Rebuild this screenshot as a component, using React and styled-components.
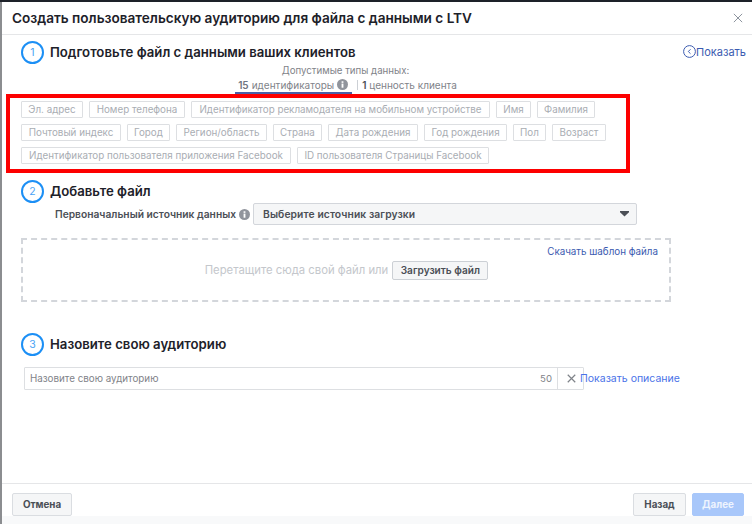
import React from "react";
import styled, { createGlobalStyle } from "styled-components";

const Global = createGlobalStyle`
  html, body { margin: 0; padding: 0; background: #fff; }
  body { font-family: Inter, "Liberation Sans", sans-serif; -webkit-font-smoothing: antialiased; }
`;

const Page = styled.div`
  width: 752px; height: 524px; overflow: hidden; display: flex; flex-direction: column;
  border-top: 2px solid #1d2129; box-sizing: border-box;
`;
const Modal = styled.div`
  flex: 1; display: flex; flex-direction: column; min-height: 0;
  border-left: 2px solid #8b8d90; background: #fff; color: #1d2129;
`;
const Header = styled.header`
  height: 32px; flex: none; display: flex; align-items: center; justify-content: space-between;
  padding: 0 9px 0 10px; border-bottom: 1px solid #e5e6e8; box-sizing: content-box;
`;
const Title = styled.h1`
  margin: 0; font-size: 13.6px; font-weight: 600; color: #1d2129; white-space: nowrap;
`;
const CloseButton = styled.span`
  display: flex; color: #8d949e;
`;
const Content = styled.main`
  flex: 1; min-height: 0; display: flex; flex-direction: column; padding: 6px 6px 0 19px;
`;
const StepRow = styled.div`
  display: flex; align-items: center; height: 23px; margin-top: ${p => p.$top || 0}px;
`;
const Circle = styled.span`
  width: 23px; height: 23px; box-sizing: border-box; border: 2px solid #1c8ff5; border-radius: 50%;
  color: #4aa3f5; font-size: 10.5px; display: flex; align-items: center; justify-content: center; flex: none;
`;
const StepTitle = styled.h2`
  margin: 0 0 0 6px; padding-bottom: 2px; font-size: 13.2px; font-weight: 600; color: #1d2129; white-space: nowrap;
`;
const ShowLink = styled.a`
  margin-left: auto; padding-bottom: 2px; display: flex; align-items: center; color: #3b5bb0; font-size: 11px;
`;
const TypesBlock = styled.div`
  display: flex; flex-direction: column; align-items: center; width: 650px;
`;
const TypesCaption = styled.div`
  font-size: 9.7px; color: #7f8389; line-height: 13px; margin-left: -1px;
`;
const Tabs = styled.div`
  display: flex; align-items: flex-start; height: 17px;
`;
const Tab = styled.div`
  display: flex; align-items: center; gap: 3px; height: 15px; padding: ${p => (p.$active ? "0 4px 0 3px" : "0")}; font-size: 10px; color: #7f8389;
  border-bottom: ${p => (p.$active ? "2px solid #4a60a8" : "none")};
  b { font-weight: 600; color: ${p => (p.$active ? "#6f7480" : "#4b4f56")}; }
`;
const TabDivider = styled.span`
  width: 1px; height: 10px; background: #ccd0d5; margin: 3px 4px 0 5px;
`;
const RedBox = styled.div`
  margin-left: -15px; width: 624px; height: 79px; box-sizing: border-box; border: 4px solid #fd0000;
  padding: 3px 0 0 11px; display: flex; flex-wrap: wrap; align-content: flex-start; gap: 6px;
`;
const Tag = styled.span`
  width: ${p => p.$w}px; height: 17px; box-sizing: border-box; border: 1px solid #dddfe2; border-radius: 1px;
  display: flex; align-items: center; justify-content: center; font-size: 9.8px; color: #a9adb3; white-space: nowrap;
`;
const SourceRow = styled.div`
  display: flex; align-items: center; height: 22px; margin-left: 34px;
`;
const SourceLabel = styled.span`
  font-size: 10.25px; font-weight: 600; color: #4b4f56; white-space: nowrap; margin-right: 3px; padding-bottom: 1px;
`;
const SelectBox = styled.div`
  width: 384px; height: 22px; box-sizing: border-box; margin-left: 3px; border: 1px solid #d3d6db; border-radius: 2px;
  background: #f5f6f7; display: flex; align-items: center; justify-content: space-between;
  padding: 0 7px 0 9px; font-size: 10.3px; letter-spacing: 0.1px; font-weight: 600; color: #4b4f56;
`;
const DropZone = styled.div`
  width: 650px; height: 64px; box-sizing: border-box; margin-top: 13px; border: 2px dashed #d3d6db;
  display: flex; align-items: center; justify-content: center; gap: 4px; position: relative;
  font-size: 11.3px; color: #c4c7cc; padding-left: 1px;
`;
const TemplateLink = styled.a`
  position: absolute; top: 6px; right: 11px; font-size: 9.8px; color: #3b5bb0; white-space: nowrap;
`;
const UploadButton = styled.span`
  width: 96px; height: 19px; box-sizing: border-box; border: 1px solid #ccd0d5; border-radius: 2px; background: #f5f6f7;
  display: flex; align-items: center; justify-content: center; font-size: 10.1px; font-weight: 600; color: #4b4f56; white-space: nowrap;
`;
const NameRow = styled.div`
  display: flex; align-items: center; margin: 11px 0 0 3px; height: 23px;
`;
const NameField = styled.div`
  width: 560px; height: 23px; box-sizing: border-box; border: 1px solid #dddfe2; border-radius: 1px;
  display: flex; align-items: center; font-size: 9.8px; color: #7f8389; padding-left: 5px; flex: none;
`;
const Count = styled.span`
  margin-left: auto; padding-right: 5px; font-size: 9.6px; color: #7f8389;
`;
const Clear = styled.span`
  width: 26px; height: 100%; border-left: 1px solid #dddfe2; display: flex; align-items: center; color: #7f8389; padding-left: 9px; box-sizing: border-box;
`;
const DescLink = styled.a`
  font-size: 10.5px; color: #4a72e8; white-space: nowrap; margin-left: -4px; position: relative;
`;
const Footer = styled.footer`
  height: 32px; flex: none; border-top: 1px solid #e5e6e8; display: flex; align-items: flex-end; padding: 0 8px 0 10px; gap: 6px;
`;
const FooterButton = styled.span`
  height: 23px; width: ${p => p.$w}px; box-sizing: border-box; border: 1px solid ${p => (p.$primary ? "#a8c7fa" : "#dadde1")}; border-radius: 2px;
  background: ${p => (p.$primary ? "#a8c7fa" : "#f5f6f7")}; color: ${p => (p.$primary ? "#eef4fe" : "#4b4f56")};
  display: flex; align-items: center; justify-content: center; font-size: 9.8px; font-weight: 700;
  margin-left: ${p => (p.$push ? "auto" : "0")};
`;
const BottomBand = styled.div`
  height: 8px; flex: none; background: #f8f9fa;
`;

const InfoIcon = () => (
  <svg width="11" height="11" viewBox="0 0 12 12" style={{ flex: "none" }}>
    <circle cx="6" cy="6" r="6" fill="#90949c" />
    <rect x="5" y="5" width="2" height="4.5" fill="#fff" />
    <rect x="5" y="2.5" width="2" height="1.7" fill="#fff" />
  </svg>
);
const BackCircle = () => (
  <svg width="13" height="13" viewBox="0 0 13 13">
    <circle cx="6.5" cy="6.5" r="5.9" fill="none" stroke="#3b5bb0" strokeWidth="1" />
    <path d="M7.5 4.3 5.3 6.5l2.2 2.2" fill="none" stroke="#3b5bb0" strokeWidth="1" />
  </svg>
);
const Cross = ({ size, width = 1.2 }) => (
  <svg width={size} height={size} viewBox="0 0 12 12">
    <path d="M1 1l10 10M11 1 1 11" stroke="currentColor" strokeWidth={width} fill="none" />
  </svg>
);
const Caret = () => (
  <svg width="9" height="6" viewBox="0 0 9 6">
    <path d="M0 0h9v1.2L4.5 5.6 0 1.2z" fill="#4b4f56" />
  </svg>
);

const tags = [
  ["Эл. адрес", 62], ["Номер телефона", 96], ["Идентификатор рекламодателя на мобильном устройстве", 299], ["Имя", 35], ["Фамилия", 58],
  ["Почтовый индекс", 100], ["Город", 43], ["Регион/область", 91], ["Страна", 49], ["Дата рождения", 90], ["Год рождения", 83], ["Пол", 33], ["Возраст", 54],
  ["Идентификатор пользователя приложения Facebook", 270], ["ID пользователя Страницы Facebook", 192],
];

export default function App() {
  return (
    <Page>
      <Global />
      <Modal>
        <Header>
          <Title>Создать пользовательскую аудиторию для файла с данными с LTV</Title>
          <CloseButton><Cross size={10} /></CloseButton>
        </Header>
        <Content>
          <StepRow>
            <Circle>1</Circle>
            <StepTitle>Подготовьте файл с данными ваших клиентов</StepTitle>
            <ShowLink><BackCircle />Показать</ShowLink>
          </StepRow>
          <TypesBlock>
            <TypesCaption>Допустимые типы данных:</TypesCaption>
            <Tabs>
              <Tab $active><b>15</b> идентификаторы <InfoIcon /></Tab>
              <TabDivider />
              <Tab><span><b>1</b> ценность клиента</span></Tab>
            </Tabs>
          </TypesBlock>
          <RedBox>
            {tags.map(([t, w]) => <Tag key={t} $w={w}>{t}</Tag>)}
          </RedBox>
          <StepRow $top={7}>
            <Circle>2</Circle>
            <StepTitle>Добавьте файл</StepTitle>
          </StepRow>
          <SourceRow>
            <SourceLabel>Первоначальный источник данных</SourceLabel>
            <InfoIcon />
            <SelectBox>Выберите источник загрузки<Caret /></SelectBox>
          </SourceRow>
          <DropZone>
            Перетащите сюда свой файл или
            <UploadButton>Загрузить файл</UploadButton>
            <TemplateLink>Скачать шаблон файла</TemplateLink>
          </DropZone>
          <StepRow $top={31}>
            <Circle>3</Circle>
            <StepTitle>Назовите свою аудиторию</StepTitle>
          </StepRow>
          <NameRow>
            <NameField>
              Назовите свою аудиторию
              <Count>50</Count>
              <Clear><Cross size={9} width={1.6} /></Clear>
            </NameField>
            <DescLink>Показать описание</DescLink>
          </NameRow>
        </Content>
        <Footer>
          <FooterButton $w={60}>Отмена</FooterButton>
          <FooterButton $w={53} $push>Назад</FooterButton>
          <FooterButton $w={52} $primary>Далее</FooterButton>
        </Footer>
        <BottomBand />
      </Modal>
    </Page>
  );
}
